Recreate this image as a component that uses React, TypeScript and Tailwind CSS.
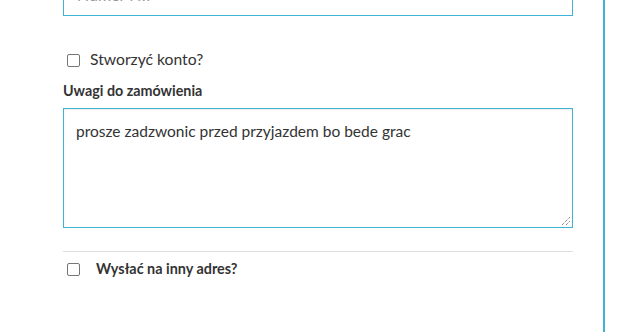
import React from "react";

export default function App() {
  return (
    <div className="w-[624px] h-[332px] bg-white overflow-hidden flex" style={{ fontFamily: "Lato, 'Open Sans', sans-serif" }}>
      <div className="ml-[63px] w-[510px] flex flex-col">
        <div className="mt-[-26px] h-[42px] border border-[#3fb2d5] px-[13px] flex items-center text-[16px] text-[#999]">
          Numer NIP
        </div>
        <label className="mt-[37px] flex items-center h-[14px] text-[15.7px] text-[#333]">
          <span className="ml-[4px] w-[13px] h-[13px] border border-[#767676] rounded-[2px] bg-white" />
          <span className="ml-[10px] leading-none">Stworzyć konto?</span>
        </label>
        <div className="mt-[17px] text-[14.3px] font-bold text-[#333] leading-none">Uwagi do zamówienia</div>
        <div className="mt-[10px] h-[120px] border border-[#3fb2d5] relative shadow-[inset_0_1px_2px_rgba(0,0,0,0.08)] px-[12px] pt-[11px] text-[15.5px] text-[#333]">
          prosze zadzwonic przed przyjazdem bo bede grac
          <svg className="absolute right-[1px] bottom-[1px]" width="10" height="10" viewBox="0 0 10 10">
            <line x1="1" y1="9" x2="9" y2="1" stroke="#555" strokeWidth="1" strokeDasharray="1 1" />
            <line x1="5" y1="9" x2="9" y2="5" stroke="#555" strokeWidth="1" strokeDasharray="1 1" />
          </svg>
        </div>
        <div className="mt-[23px] h-px bg-[#dedede]" />
        <label className="mt-[11px] flex items-center h-[12px] text-[14.4px] font-bold text-[#333]">
          <span className="ml-[4px] w-[13px] h-[13px] border border-[#767676] rounded-[2px] bg-white" />
          <span className="ml-[16px] leading-none">Wysłać na inny adres?</span>
        </label>
      </div>
      <div className="ml-[30px] w-[2px] h-full bg-[#3fb2d5]" />
    </div>
  );
}
